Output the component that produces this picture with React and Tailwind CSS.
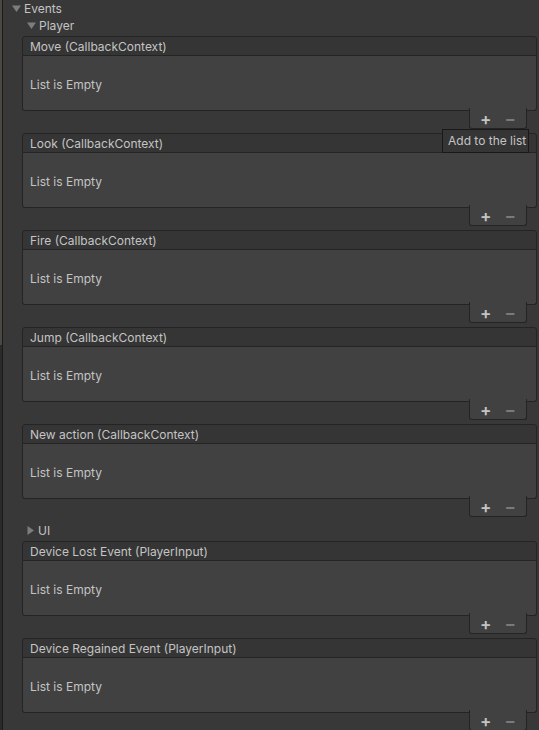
import React from 'react'

const GROUP_A = ['Move', 'Look', 'Fire', 'Jump', 'New action']
const GROUP_B = ['Device Lost Event (PlayerInput)', 'Device Regained Event (PlayerInput)']

function Caret({ open }) {
  return open ? (
    <svg width="9" height="7" viewBox="0 0 9 7" className="shrink-0">
      <path d="M0 0.5 H9 L4.5 7 Z" fill="#7d7d7d" />
    </svg>
  ) : (
    <svg width="7" height="9" viewBox="0 0 7 9" className="shrink-0">
      <path d="M0.5 0 V9 L7 4.5 Z" fill="#7d7d7d" />
    </svg>
  )
}

function EventList({ title }) {
  return (
    <div className="ml-[22px] mr-[2px] mb-[4px]">
      <div className="h-[20px] border border-[#242424] rounded-t-[3px] bg-[#353535] flex items-center pl-[7px] pt-[1px] text-[12px] text-[#c4c4c4]">
        {title}
      </div>
      <div className="h-[55px] border-x border-b border-[#242424] rounded-b-[3px] bg-[#414141] flex items-center pl-[7px] pt-[3px] text-[12px] text-[#c4c4c4]">
        List is Empty
      </div>
      <div className="flex justify-end pr-[10px] -mt-[3px]">
        <div className="w-[58px] h-[21px] pt-[3px] border-x border-b border-[#242424] rounded-b-[3px] bg-[#414141] flex items-center justify-center gap-[13px]">
          <span className="text-[17px] leading-none text-[#c4c4c4] font-semibold">+</span>
          <span className="text-[17px] leading-none text-[#7a7a7a] font-semibold">−</span>
        </div>
      </div>
    </div>
  )
}

export default function App() {
  return (
    <div className="relative w-[539px] h-[730px] overflow-hidden bg-[#383838] flex" style={{ fontFamily: 'Inter, "Noto Sans", sans-serif' }}>
      {/* left gutter */}
      <div className="w-[2px] flex flex-col">
        <div className="h-[345px] bg-[#4b4843]" />
        <div className="flex-1 bg-[#2a2a2a]" />
      </div>
      <div className="w-[1px] bg-[#1b1b1b]" />

      <div className="flex-1 -ml-[3px]">
        <div className="h-[17px] flex items-center gap-[3px] pl-[12px] text-[12px] text-[#c4c4c4]">
          <Caret open />
          <span>Events</span>
        </div>
        <div className="h-[17px] mb-[2px] flex items-center gap-[3px] pl-[27px] text-[12px] text-[#c4c4c4]">
          <Caret open />
          <span>Player</span>
        </div>

        {GROUP_A.map((n) => (
          <EventList key={n} title={`${n} (CallbackContext)`} />
        ))}

        <div className="h-[18px] mb-[2px] flex items-center gap-[4px] pl-[27px] pt-[1px] text-[12px] text-[#c4c4c4]">
          <Caret />
          <span>UI</span>
        </div>

        {GROUP_B.map((n) => (
          <EventList key={n} title={n} />
        ))}
      </div>

      {/* tooltip */}
      <div className="absolute left-[442px] top-[129px] w-[87px] h-[24px] bg-[#353535] border border-[#191919] flex items-center pl-[5px] text-[12px] text-[#c4c4c4]">
        Add to the list
      </div>
    </div>
  )
}
